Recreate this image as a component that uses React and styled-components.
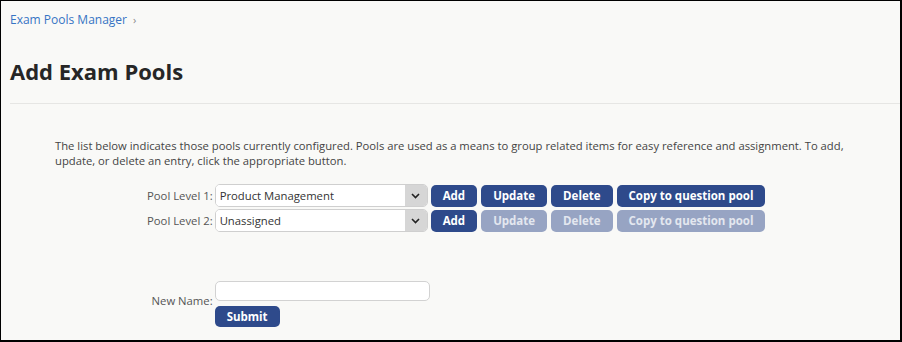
import styled, { createGlobalStyle } from "styled-components";

const GlobalStyle = createGlobalStyle`
  html, body {
    margin: 0;
    padding: 0;
    background: #f9f9f7;
  }
  body {
    font-family: "Open Sans", "Liberation Sans", sans-serif;
    color: #333;
  }
`;

const Frame = styled.div`
  box-sizing: border-box;
  width: 902px;
  height: 342px;
  background: #f9f9f7;
  border-style: solid;
  border-color: #000;
  border-width: 1px 2px 2px 1px;
  overflow: hidden;
`;

const Header = styled.div`
  padding: 9px 0 0 9px;
`;

const Breadcrumb = styled.div`
  display: flex;
  align-items: center;
  gap: 6px;
  font-size: 12px;
  line-height: 20px;

  a {
    color: #3674c4;
    text-decoration: none;
  }
  span {
    color: #888;
    font-size: 11px;
  }
`;

const Title = styled.h1`
  margin: 27px 0 0;
  font-size: 22px;
  line-height: 28px;
  font-weight: 700;
  color: #262626;
`;

const Divider = styled.hr`
  margin: 18px 0 0 9px;
  border: none;
  border-top: 1px solid #e6e6e4;
`;

const Content = styled.div`
  padding: 34px 40px 0 54px;
`;

const Intro = styled.p`
  margin: 0;
  font-size: 11.25px;
  line-height: 15px;
  color: #444;
`;

const FormGrid = styled.div`
  display: grid;
  grid-template-columns: auto auto;
  justify-content: start;
  align-items: center;
  column-gap: 2px;
  row-gap: 2px;
  margin: 16px 0 0 92px;
`;

const Label = styled.label`
  font-size: 11.3px;
  color: #555;
  text-align: right;
  white-space: nowrap;
  margin-bottom: ${({ $lift }) => $lift || 0}px;
`;

const Controls = styled.div`
  display: flex;
  align-items: center;
  gap: 4px;
`;

const Spacer = styled.div`
  grid-column: 1 / -1;
  height: ${({ $h }) => $h}px;
`;

const Stack = styled.div`
  display: flex;
  flex-direction: column;
  align-items: flex-start;
  gap: 5px;
`;

const SelectWrap = styled.div`
  display: flex;
  width: 213px;
  height: 23px;
  box-sizing: border-box;
  border: 1px solid #cfcfcf;
  border-radius: 5px;
  overflow: hidden;
  background: #fff;
  margin-right: -1px;
`;

const Select = styled.select`
  flex: 1;
  min-width: 0;
  appearance: none;
  border: none;
  outline: none;
  background: #fff;
  font-family: "Open Sans", "Liberation Sans", sans-serif;
  font-size: 11.3px;
  color: #333;
  padding: 0 4px;
`;

const Arrow = styled.div`
  width: 22px;
  display: flex;
  align-items: center;
  justify-content: center;
  background: #d6d6d6;
`;

const Button = styled.button`
  height: ${({ $h }) => $h || 22}px;
  padding: 0 12px;
  border: none;
  border-radius: 5px;
  background: ${({ disabled }) => (disabled ? "#97a4c3" : "#2e4a8b")};
  color: ${({ disabled }) => (disabled ? "#e3e7ef" : "#fff")};
  font-family: "Open Sans", "Liberation Sans", sans-serif;
  font-size: 11.5px;
  font-weight: 700;
  cursor: ${({ disabled }) => (disabled ? "default" : "pointer")};
`;

const TextInput = styled.input`
  box-sizing: border-box;
  width: 215px;
  height: 20px;
  border: 1px solid #d2d2d2;
  border-radius: 5px;
  background: #fff;
  outline: none;
`;

const Chevron = () => (
  <svg width="9" height="6" viewBox="0 0 9 6">
    <path d="M1 1l3.5 3.5L8 1" fill="none" stroke="#222" strokeWidth="1.6" />
  </svg>
);

const PoolRow = ({ level, value, active }) => (
  <>
    <Label>Pool Level {level}:</Label>
    <Controls>
      <SelectWrap>
        <Select defaultValue={value}>
          <option>{value}</option>
        </Select>
        <Arrow>
          <Chevron />
        </Arrow>
      </SelectWrap>
      <Button>Add</Button>
      <Button disabled={!active}>Update</Button>
      <Button disabled={!active}>Delete</Button>
      <Button disabled={!active}>Copy to question pool</Button>
    </Controls>
  </>
);

export default function App() {
  return (
    <Frame>
      <GlobalStyle />
      <Header>
        <Breadcrumb>
          <a href="#">Exam Pools Manager</a>
          <span>›</span>
        </Breadcrumb>
        <Title>Add Exam Pools</Title>
      </Header>
      <Divider />
      <Content>
        <Intro>
          The list below indicates those pools currently configured. Pools are used as a means to
          group related items for easy reference and assignment. To add, update, or delete an
          entry, click the appropriate button.
        </Intro>
        <FormGrid>
          <PoolRow level={1} value="Product Management" active />
          <PoolRow level={2} value="Unassigned" />
          <Spacer $h={45} />
          <Label $lift={7}>New Name:</Label>
          <Stack>
            <TextInput type="text" />
            <Button $h={21}>Submit</Button>
          </Stack>
        </FormGrid>
      </Content>
    </Frame>
  );
}
